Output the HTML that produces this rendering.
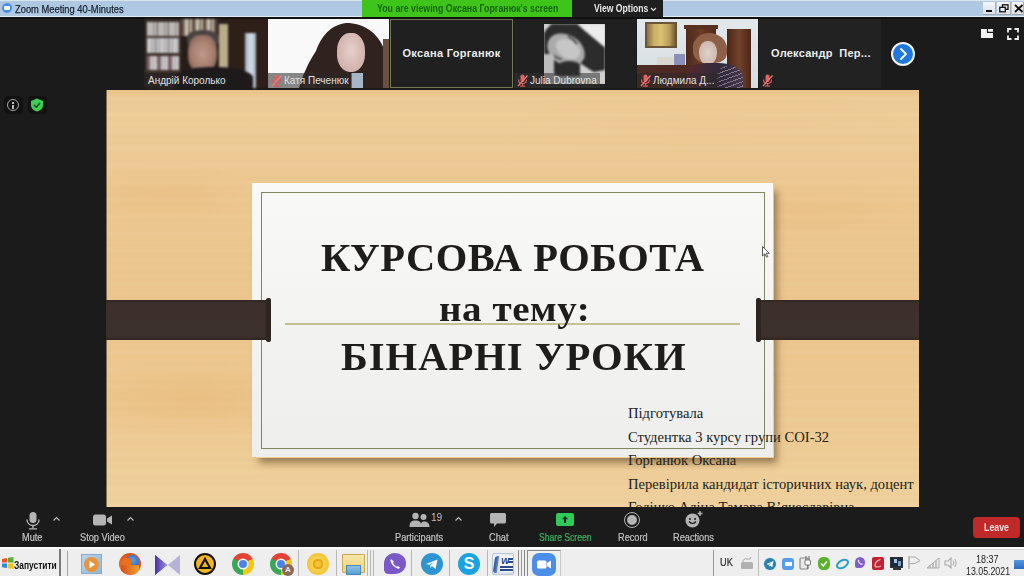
<!DOCTYPE html>
<html><head><meta charset="utf-8">
<style>
*{margin:0;padding:0;box-sizing:border-box}
html,body{width:1024px;height:576px;overflow:hidden;background:#1b1b1b;font-family:"Liberation Sans",sans-serif}
.a{position:absolute}
#titlebar{left:0;top:0;width:1024px;height:17px;background:linear-gradient(180deg,#b0c8e0,#aec8e4 50%,#b0cae2);border-top:1px solid #d6e6ec;border-bottom:1px solid #e2eaf2}
#ttext{left:15px;top:3px;font-size:11px;line-height:12px;color:#18222e;white-space:nowrap;transform:scaleX(0.85);transform-origin:0 0;-webkit-text-stroke:0.25px #18222e}
#green{left:362px;top:0;width:210px;height:17px;background:#3fc41a}
#gtext{left:377px;top:3px;font-size:10px;line-height:12px;color:#17650c;white-space:nowrap;font-weight:bold;transform:scaleX(0.88);transform-origin:0 0}
#vopt{left:572px;top:0;width:91px;height:17px;background:#1f1f1f}
#votext{left:594px;top:3px;font-size:10px;line-height:12px;color:#e8e8e8;font-weight:bold;white-space:nowrap;transform:scaleX(0.86);transform-origin:0 0}
.wbtn{top:2px;height:13px;background:linear-gradient(#f4f6f8,#dde2e6);border-bottom:1px solid #9aa3aa;border-right:1px solid #aab2b8}
#slide{left:106px;top:90px;width:813px;height:417px;overflow:hidden;background:#e9c692}
#toolbar{left:0;top:507px;width:1024px;height:39px;background:#1b1b1b}
#taskbar{left:0;top:547px;width:1024px;height:29px;background:#eeeeee;border-top:2px solid #fbfbfb}
.name{font-size:10px;color:#e0e0e0;white-space:nowrap;line-height:13px}
.tlbl{font-size:10px;line-height:12px;color:#c2c2c2;white-space:nowrap;transform:scaleX(0.92);transform-origin:0 0;-webkit-text-stroke:0.2px #c2c2c2}
.tsep{top:550px;width:1px;height:26px;background:#b8b8b8}
.chrome{width:22px;height:22px;border-radius:50%;background:conic-gradient(from -60deg,#e34234 0deg 120deg,#f5c518 120deg 240deg,#3aa757 240deg 360deg)}
.chrome::after{content:"";position:absolute;left:7px;top:7px;width:8px;height:8px;border-radius:50%;background:#4a86e8;box-shadow:0 0 0 1.5px #f4f4f4}
</style></head><body>
<!-- title bar -->
<div id="titlebar" class="a"></div>
<div class="a" style="left:2px;top:3px;width:10px;height:10px;border-radius:50%;background:#4a8ee8"></div>
<div class="a" style="left:4px;top:6px;width:6px;height:4px;background:#fff;border-radius:1px"></div>
<div id="ttext" class="a">Zoom Meeting 40-Minutes</div>
<div id="green" class="a"></div>
<div id="gtext" class="a">You are viewing Оксана Горганюк's screen</div>
<div id="vopt" class="a"></div>
<div id="votext" class="a">View Options</div><svg class="a" style="left:650px;top:7px" width="7" height="5"><path d="M1 1 L3.5 3.5 L6 1" stroke="#ddd" stroke-width="1.2" fill="none"/></svg>
<div class="a wbtn" style="left:983px;width:13px"></div>
<div class="a wbtn" style="left:997px;width:14px"></div>
<div class="a wbtn" style="left:1012px;width:12px"></div>
<div class="a" style="left:986px;top:10px;width:6px;height:2px;background:#111"></div>
<svg class="a" style="left:999px;top:4px" width="10" height="9"><rect x="3.5" y="0.8" width="5.5" height="4.5" fill="none" stroke="#111" stroke-width="1.3"/><rect x="0.8" y="3.3" width="5.5" height="4.5" fill="#eef0f2" stroke="#111" stroke-width="1.3"/></svg>
<svg class="a" style="left:1014px;top:4px" width="10" height="9"><path d="M1 1 L8.5 8 M8.5 1 L1 8" stroke="#111" stroke-width="1.8"/></svg>


<!-- participant strip -->
<div class="a" style="left:0;top:17px;width:1024px;height:2px;background:#111"></div>
<!-- tile1 Андрій -->
<div class="a" style="left:145px;top:19px;width:123px;height:69px;overflow:hidden;background:#2b201b;filter:blur(0.8px)">
  <div class="a" style="left:0;top:0;width:36px;height:69px;background:#3d2f2a"></div>
  <div class="a" style="left:2px;top:3px;width:32px;height:14px;opacity:0.8;background:repeating-linear-gradient(90deg,#e6e6e6 0 3px,#b9b4ad 3px 4px,#f2f2f2 4px 6px,#8a8078 6px 7px,#d8d8d8 7px 10px,#5a4a44 10px 11px)"></div>
  <div class="a" style="left:2px;top:19px;width:32px;height:15px;opacity:0.8;background:repeating-linear-gradient(90deg,#f0f0f0 0 4px,#c8ccd2 4px 6px,#eaeaea 6px 8px,#7c7672 8px 9px,#dfe4ea 9px 12px,#a9b4c0 12px 13px)"></div>
  <div class="a" style="left:2px;top:37px;width:32px;height:14px;opacity:0.8;background:repeating-linear-gradient(90deg,#8e6e80 0 3px,#e8e8e8 3px 6px,#c4c4c4 6px 7px,#f0f0f0 7px 10px,#6e6a66 10px 11px)"></div>
  <div class="a" style="left:36px;top:0;width:36px;height:17px;background:repeating-linear-gradient(90deg,#5a4a3e 0 3px,#a89e8e 3px 5px,#d8d2c4 5px 7px,#7a6e62 7px 9px,#c2b6a0 9px 11px)"></div>
  <div class="a" style="left:36px;top:17px;width:38px;height:52px;background:#261c18"></div>
  <div class="a" style="left:74px;top:5px;width:9px;height:56px;background:#b9ad8c"></div>
  <div class="a" style="left:83px;top:0;width:40px;height:69px;background:#2e1f19"></div>
  <div class="a" style="left:100px;top:14px;width:11px;height:55px;background:linear-gradient(90deg,#9eacba,#d8e0e8 50%,#a4b2c0)"></div>
  <div class="a" style="left:42px;top:11px;width:32px;height:14px;border-radius:50% 50% 10% 10%;background:#4a4240"></div>
  <div class="a" style="left:43px;top:16px;width:29px;height:38px;border-radius:40% 40% 45% 45%;background:radial-gradient(ellipse at 50% 50%,#c09a8a 0,#a88070 50%,#6e5248 100%)"></div>
  <div class="a" style="left:30px;top:48px;width:78px;height:24px;border-radius:45% 45% 0 0;background:#1e1a1c"></div>
</div>
<div class="a" style="left:145px;top:73px;width:83px;height:15px;background:rgba(28,28,28,0.5)"></div>
<div class="a name" style="left:148px;top:74px">Андрій Королько</div>

<!-- tile2 Катя -->
<div class="a" style="left:268px;top:19px;width:121px;height:69px;overflow:hidden;background:#f9f9f9;filter:blur(0.7px)">
  <svg class="a" style="left:0;top:0" width="121" height="69"><path d="M31 69 C34 58 40 44 48 32 C53 18 62 6 78 4 C96 4 110 14 116 30 C120 42 121 55 121 69 Z" fill="#30231f"/><path d="M44 50 C40 58 36 64 34 69 L48 69 Z" fill="#3a2a24"/></svg>
  <div class="a" style="left:69px;top:14px;width:28px;height:39px;border-radius:45%;background:radial-gradient(ellipse at 50% 45%,#e6d0cc 0,#d2b2ac 70%,#a8867e 100%)"></div>
  <div class="a" style="left:83px;top:54px;width:12px;height:15px;background:#a6b6c6"></div>
  <div class="a" style="left:115px;top:20px;width:6px;height:49px;background:#6a5040"></div>
</div>
<div class="a" style="left:268px;top:73px;width:84px;height:15px;background:rgba(40,40,40,0.55)"></div>
<svg class="a" style="left:271px;top:74px" width="11" height="13"><rect x="3.5" y="0.5" width="4" height="7.5" rx="2" fill="#dd6464"/><path d="M1.5 5.5 Q1.5 9.5 5.5 9.5 Q9.5 9.5 9.5 5.5" stroke="#d65a5a" stroke-width="1.2" fill="none"/><rect x="5" y="9.5" width="1.2" height="2.5" fill="#d65a5a"/><rect x="3" y="11.5" width="5" height="1.2" fill="#d65a5a"/><path d="M1 12 L10.5 1.5" stroke="#e87a7a" stroke-width="1.3"/></svg>
<div class="a name" style="left:284px;top:74px">Катя Печенюк</div>

<!-- tile3 Оксана -->
<div class="a" style="left:390px;top:19px;width:123px;height:69px;background:#202020;border:1px solid #717a55"></div>
<div class="a" style="left:390px;top:47px;width:123px;text-align:center;font-size:11px;line-height:13px;font-weight:bold;color:#ececec;white-space:nowrap;letter-spacing:0.3px">Оксана Горганюк</div>

<!-- tile4 Julia -->
<div class="a" style="left:514px;top:19px;width:122px;height:69px;background:#202020"></div>
<div class="a" style="left:544px;top:24px;width:61px;height:60px;overflow:hidden;background:#bdbdbd">
  <svg class="a" style="left:0;top:0;filter:blur(0.8px)" width="61" height="60">
    <rect x="0" y="0" width="12" height="9" fill="#d6d6d6"/>
    <path d="M29 -2 L63 -2 L63 26 C52 18 40 8 29 -2 Z" fill="#ececec"/>
    <path d="M10 -2 L31 -2 C42 8 54 18 63 25 L63 48 L50 50 C44 44 38 40 34 38 L26 50 L12 52 L0 30 L0 9 C3 4 6 1 10 -2 Z" fill="#2c2c2c"/>
    <ellipse cx="22" cy="26" rx="20" ry="15" transform="rotate(32 22 26)" fill="#ababab"/>
    <ellipse cx="24" cy="25" rx="13" ry="9" transform="rotate(32 24 25)" fill="#c6c6c6"/>
    <path d="M24 12 C28 14 31 17 33 20" stroke="#3a3a3a" stroke-width="1.6" fill="none"/>
    <path d="M9 30 C12 34 15 35 18 35" stroke="#3a3a3a" stroke-width="1.4" fill="none"/>
    <rect x="0" y="30" width="10" height="20" fill="#bcbcbc"/>
    <path d="M36 40 L50 48 L61 46 L61 60 L34 60 Z" fill="#cfcfcf"/>
    <path d="M14 40 C20 36 30 36 36 40 L36 52 L14 52 Z" fill="#2c2c2c"/>
  </svg>
</div>
<div class="a" style="left:514px;top:73px;width:86px;height:15px;background:rgba(50,50,50,0.55)"></div>
<svg class="a" style="left:517px;top:74px" width="11" height="13"><rect x="3.5" y="0.5" width="4" height="7.5" rx="2" fill="#dd6464"/><path d="M1.5 5.5 Q1.5 9.5 5.5 9.5 Q9.5 9.5 9.5 5.5" stroke="#d65a5a" stroke-width="1.2" fill="none"/><rect x="5" y="9.5" width="1.2" height="2.5" fill="#d65a5a"/><rect x="3" y="11.5" width="5" height="1.2" fill="#d65a5a"/><path d="M1 12 L10.5 1.5" stroke="#e87a7a" stroke-width="1.3"/></svg>
<div class="a name" style="left:530px;top:74px">Julia Dubrovna</div>

<!-- tile5 Людмила -->
<div class="a" style="left:637px;top:19px;width:121px;height:69px;overflow:hidden;background:linear-gradient(180deg,#e2e8ec,#d6dde0);filter:blur(0.7px)">
  <div class="a" style="left:8px;top:3px;width:32px;height:26px;background:linear-gradient(90deg,#8a7040,#c8ae68 25%,#dcc274 50%,#b89c58 80%,#7a6038);border:2px solid #6a5538"></div>
  <div class="a" style="left:49px;top:7px;width:30px;height:52px;background:linear-gradient(90deg,#4e2a1c,#6a3a26 50%,#4e2a1c)"></div>
  <div class="a" style="left:47px;top:6px;width:34px;height:4px;background:#5a3020"></div>
  <div class="a" style="left:90px;top:10px;width:24px;height:59px;background:linear-gradient(90deg,#4a2618,#74422a 50%,#4a2618)"></div>
  <div class="a" style="left:20px;top:38px;width:16px;height:8px;background:#d8d8d0"></div>
  <div class="a" style="left:37px;top:35px;width:11px;height:11px;background:#8a90b8"></div>
  <div class="a" style="left:0;top:46px;width:56px;height:23px;background:#4e2a24"></div>
  <div class="a" style="left:56px;top:14px;width:34px;height:30px;border-radius:50% 55% 35% 40%;background:#8e6048"></div>
  <div class="a" style="left:62px;top:22px;width:18px;height:24px;border-radius:45% 45% 50% 50%;background:radial-gradient(ellipse,#e0d2ca,#c6aea2)"></div>
  <div class="a" style="left:50px;top:44px;width:56px;height:28px;border-radius:35% 45% 0 0;background:linear-gradient(90deg,#5a2830,#3e2a36 35%,#2e2a3e 65%,#4a3a50)"></div>
  <div class="a" style="left:80px;top:47px;width:26px;height:24px;border-radius:40% 50% 0 0;background:repeating-linear-gradient(160deg,rgba(0,0,0,0) 0 3px,rgba(210,180,180,0.5) 3px 4px)"></div>
</div>
<div class="a" style="left:637px;top:73px;width:82px;height:15px;background:rgba(40,40,40,0.45)"></div>
<svg class="a" style="left:640px;top:74px" width="11" height="13"><rect x="3.5" y="0.5" width="4" height="7.5" rx="2" fill="#dd6464"/><path d="M1.5 5.5 Q1.5 9.5 5.5 9.5 Q9.5 9.5 9.5 5.5" stroke="#d65a5a" stroke-width="1.2" fill="none"/><rect x="5" y="9.5" width="1.2" height="2.5" fill="#d65a5a"/><rect x="3" y="11.5" width="5" height="1.2" fill="#d65a5a"/><path d="M1 12 L10.5 1.5" stroke="#e87a7a" stroke-width="1.3"/></svg>
<div class="a name" style="left:653px;top:74px">Людмила Д...</div>

<!-- tile6 Олександр -->
<div class="a" style="left:759px;top:19px;width:122px;height:69px;background:#222222"></div>
<div class="a" style="left:771px;top:47px;font-size:11px;line-height:13px;font-weight:bold;color:#ececec;white-space:nowrap;letter-spacing:0.25px">Олександр&nbsp; Пер...</div>
<svg class="a" style="left:762px;top:74px" width="11" height="13"><rect x="3.5" y="0.5" width="4" height="7.5" rx="2" fill="#dd6464"/><path d="M1.5 5.5 Q1.5 9.5 5.5 9.5 Q9.5 9.5 9.5 5.5" stroke="#d65a5a" stroke-width="1.2" fill="none"/><rect x="5" y="9.5" width="1.2" height="2.5" fill="#d65a5a"/><rect x="3" y="11.5" width="5" height="1.2" fill="#d65a5a"/><path d="M1 12 L10.5 1.5" stroke="#e87a7a" stroke-width="1.3"/></svg>

<!-- next arrow -->
<div class="a" style="left:891px;top:42px;width:24px;height:24px;border-radius:50%;background:#1f78e0;border:2px solid #f4f4f4"></div>
<svg class="a" style="left:891px;top:42px" width="24" height="24"><path d="M10 7 L15 12 L10 17" stroke="#fff" stroke-width="1.8" fill="none" stroke-linecap="round"/></svg>
<!-- top right icons -->
<div class="a" style="left:981px;top:29px;width:12px;height:9px;background:#f4f4f4"></div>
<svg class="a" style="left:981px;top:29px" width="12" height="9"><path d="M6.5 0 V3.3 H12" stroke="#1b1b1b" stroke-width="1.2" fill="none"/></svg>
<svg class="a" style="left:1007px;top:28px" width="12" height="12"><path d="M1 4.5 V1 H4.5 M7.5 1 H11 V4.5 M11 7.5 V11 H7.5 M4.5 11 H1 V7.5" stroke="#eee" stroke-width="1.8" fill="none"/></svg>
<!-- left icons -->
<div class="a" style="left:4px;top:96px;width:19px;height:18px;border-radius:4px;background:#121212"></div>
<div class="a" style="left:7px;top:99px;width:12px;height:12px;border-radius:50%;border:1.5px solid #a8a8a8"></div>
<div class="a" style="left:12px;top:102px;width:2px;height:2px;background:#bbb"></div>
<div class="a" style="left:12px;top:105px;width:2px;height:4px;background:#bbb"></div>
<div class="a" style="left:28px;top:96px;width:19px;height:18px;border-radius:4px;background:#121212"></div>
<svg class="a" style="left:30px;top:98px" width="14" height="14"><path d="M7 0.5 L13 3 V7 C13 10.5 10 12.8 7 13.5 C4 12.8 1 10.5 1 7 V3 Z" fill="#3ccf55"/><path d="M4 7 L6.3 9.2 L10 5" stroke="#124a1c" stroke-width="1.6" fill="none"/></svg>

<!-- slide -->
<div id="slide" class="a">
  <div class="a" style="left:0;top:0;width:813px;height:417px;background:
    radial-gradient(ellipse 120px 30px at 60px 105px, rgba(228,170,105,0.22), rgba(225,160,95,0) 100%),
    radial-gradient(ellipse 140px 40px at 90px 310px, rgba(228,168,100,0.30), rgba(225,160,95,0) 100%),
    radial-gradient(ellipse 160px 35px at 700px 120px, rgba(228,170,105,0.18), rgba(225,165,100,0) 100%),
    radial-gradient(ellipse 200px 40px at 600px 30px, rgba(228,175,115,0.10), rgba(225,170,110,0) 100%),
    repeating-linear-gradient(180deg, rgba(210,150,80,0) 0px, rgba(210,150,80,0.035) 2px, rgba(210,150,80,0) 5px, rgba(255,245,220,0.04) 8px, rgba(210,150,80,0) 9px, rgba(210,150,80,0.03) 13px, rgba(210,150,80,0) 17px),
    linear-gradient(180deg,#eac38a 0px,#edcb95 8px,#eecd98 30px,#edca94 70px,#ecc891 120px,#ebc68f 170px,#ebc68e 220px,#ecc890 280px,#edca93 330px,#eecd97 375px,#efd19e 417px)"></div>
</div>
<!-- card shadow -->
<div class="a" style="left:256px;top:186px;width:518px;height:272px;box-shadow:3px 5px 7px rgba(70,45,20,0.5)"></div>
<div class="a" style="left:252px;top:183px;width:521px;height:274px;background:linear-gradient(180deg,#f9f9f8,#f2f2f1 60%,#eeeeed)"></div>
<div class="a" style="left:261px;top:192px;width:504px;height:257px;border:1.5px solid #7f875f"></div>
<div class="a" style="left:106px;top:90px;width:1px;height:417px;background:rgba(60,50,40,0.6)"></div>
<!-- dark bars -->
<div class="a" style="left:106px;top:300px;width:165px;height:40px;background:linear-gradient(180deg,#2f241f 0,#3d302a 3px,#3d312b 36px,#2f241f 40px)"></div>
<div class="a" style="left:756px;top:300px;width:163px;height:40px;background:linear-gradient(180deg,#2f241f 0,#3d302a 3px,#3d312b 36px,#2f241f 40px)"></div>
<div class="a" style="left:266px;top:298px;width:5px;height:44px;background:#2e2520;border-radius:2px"></div>
<div class="a" style="left:756px;top:298px;width:5px;height:44px;background:#2e2520;border-radius:2px"></div>
<svg class="a" style="left:762px;top:246px" width="8" height="12"><path d="M0.5 0.5 L0.5 10 L2.8 7.8 L4.5 11.2 L5.8 10.6 L4.2 7.3 L7.3 7.3 Z" fill="#fff" stroke="#333" stroke-width="0.8"/></svg>
<!-- line -->
<div class="a" style="left:285px;top:323px;width:455px;height:2px;background:#c4c293"></div>
<div id="t1" class="a" style="left:321px;top:234.5px;font:bold 39.5px/normal 'Liberation Serif',serif;letter-spacing:0.5px;color:#1f1d1c;white-space:nowrap;transform:scaleX(1.025);transform-origin:0 0">КУРСОВА РОБОТА</div>
<div id="t2" class="a" style="left:439px;top:287.8px;font:bold 35.5px/normal 'Liberation Serif',serif;letter-spacing:0.5px;color:#1f1d1c;white-space:nowrap;transform:scaleX(1.1);transform-origin:0 0">на тему:</div>
<div id="t3" class="a" style="left:341px;top:333.5px;font:bold 39.5px/normal 'Liberation Serif',serif;letter-spacing:0.9px;color:#1f1d1c;white-space:nowrap;transform:scaleX(1.03);transform-origin:0 0">БІНАРНІ УРОКИ</div>
<div class="a" style="left:628px;top:402px;font:14.6px/23.5px 'Liberation Serif',serif;color:#221e19;white-space:nowrap">Підготувала<br>Студентка 3 курсу групи СОІ-32<br>Горганюк Оксана<br>Перевірила кандидат історичних наук, доцент<br>Голінко Аліна Тамара Вʼячеславівна</div>


<!-- toolbar -->
<div id="toolbar" class="a"></div>
<!-- mute -->
<svg class="a" style="left:24px;top:511px" width="18" height="19"><rect x="5.5" y="1" width="7" height="11" rx="3.5" fill="#b4b4b4"/><path d="M3 8.5 C3 12.5 6 14.5 9 14.5 C12 14.5 15 12.5 15 8.5" stroke="#b4b4b4" stroke-width="1.4" fill="none"/><rect x="8.3" y="14.5" width="1.4" height="3" fill="#b4b4b4"/><rect x="5" y="17.2" width="8" height="1.3" fill="#b4b4b4"/></svg>
<div class="a tlbl" style="left:22px;top:532px">Mute</div>
<svg class="a" style="left:52px;top:516px" width="9" height="6"><path d="M1.5 4.5 L4.5 1.5 L7.5 4.5" stroke="#bbb" stroke-width="1.2" fill="none"/></svg>
<!-- stop video -->
<svg class="a" style="left:92px;top:513px" width="22" height="14"><rect x="1" y="1.5" width="13" height="11" rx="2.5" fill="#b4b4b4"/><path d="M15 5.5 L20 2.5 V11.5 L15 8.5 Z" fill="#b4b4b4"/></svg>
<div class="a tlbl" style="left:80px;top:532px">Stop Video</div>
<svg class="a" style="left:126px;top:516px" width="9" height="6"><path d="M1.5 4.5 L4.5 1.5 L7.5 4.5" stroke="#bbb" stroke-width="1.2" fill="none"/></svg>
<!-- participants -->
<svg class="a" style="left:409px;top:512px" width="22" height="16"><circle cx="6.5" cy="4" r="3.2" fill="#b4b4b4"/><circle cx="14.5" cy="5" r="3" fill="#b4b4b4"/><path d="M0.5 15 C0.5 9.5 3 8.5 6.5 8.5 C10 8.5 12.5 9.5 12.5 15 Z" fill="#b4b4b4"/><path d="M11 15 C11.5 11 13 9.5 15 9.5 C18 9.5 20.5 11 20.5 15 Z" fill="#b4b4b4"/></svg>
<div class="a" style="left:431px;top:512px;font-size:10px;color:#bdbdbd">19</div>
<svg class="a" style="left:454px;top:516px" width="9" height="6"><path d="M1.5 4.5 L4.5 1.5 L7.5 4.5" stroke="#bbb" stroke-width="1.2" fill="none"/></svg>
<div class="a tlbl" style="left:395px;top:532px">Participants</div>
<!-- chat -->
<svg class="a" style="left:489px;top:512px" width="18" height="16"><path d="M2.5 1 H15.5 Q17 1 17 2.5 V10 Q17 11.5 15.5 11.5 H8 L5 15 V11.5 H2.5 Q1 11.5 1 10 V2.5 Q1 1 2.5 1 Z" fill="#b4b4b4"/></svg>
<div class="a tlbl" style="left:489px;top:532px">Chat</div>
<!-- share screen -->
<div class="a" style="left:556px;top:513px;width:18px;height:13px;border-radius:2px;background:#2fcb5a"></div>
<svg class="a" style="left:556px;top:513px" width="18" height="13"><path d="M9 3 L12 6.3 H10 V10 H8 V6.3 H6 Z" fill="#0d2612"/></svg>
<div class="a tlbl" style="left:539px;top:532px;color:#3db35e;-webkit-text-stroke:0.2px #3db35e;transform:scaleX(0.86)">Share Screen</div>
<!-- record -->
<div class="a" style="left:624px;top:512px;width:16px;height:16px;border-radius:50%;border:1.5px solid #b4b4b4"></div>
<div class="a" style="left:627px;top:515px;width:10px;height:10px;border-radius:50%;background:#b4b4b4"></div>
<div class="a tlbl" style="left:618px;top:532px">Record</div>
<!-- reactions -->
<svg class="a" style="left:684px;top:510px" width="20" height="19"><circle cx="8.5" cy="10.5" r="7" fill="#b4b4b4"/><circle cx="6" cy="9" r="1" fill="#1b1b1b"/><circle cx="11" cy="9" r="1" fill="#1b1b1b"/><path d="M5 11.5 Q8.5 15.5 12 11.5" stroke="#1b1b1b" stroke-width="1.2" fill="none"/><path d="M16 1 V6 M13.5 3.5 H18.5" stroke="#b4b4b4" stroke-width="1.4"/></svg>
<div class="a tlbl" style="left:673px;top:532px">Reactions</div>
<!-- leave -->
<div class="a" style="left:973px;top:517px;width:47px;height:21px;border-radius:4px;background:#c0292a"></div>
<div class="a" style="left:984px;top:522px;font-size:10px;line-height:12px;font-weight:bold;color:#f5e0e0;white-space:nowrap;transform:scaleX(0.88);transform-origin:0 0">Leave</div>


<!-- taskbar -->
<div id="taskbar" class="a"></div>
<!-- start -->
<svg class="a" style="left:1px;top:556px" width="13" height="14"><path d="M1 3 L6 2 V6.5 H1 Z" fill="#e8542a"/><path d="M7 1.8 L12.5 1 V6.5 H7 Z" fill="#5cb030"/><path d="M1 7.5 H6 V12 L1 11.2 Z" fill="#2a8ae0"/><path d="M7 7.5 H12.5 V13 L7 12.2 Z" fill="#f6c21c"/></svg>
<div class="a" style="left:14px;top:559px;font-size:10.5px;line-height:12px;font-weight:bold;color:#111;white-space:nowrap;transform:scaleX(0.8);transform-origin:0 0">Запустити</div>
<div class="a" style="left:59px;top:549px;width:2px;height:27px;background:#7a7a7a"></div>
<div class="a" style="left:67px;top:551px;width:1px;height:25px;background:#a5a5a5"></div>
<!-- separators -->
<div class="a tsep" style="left:298px"></div>
<div class="a tsep" style="left:336px"></div>
<div class="a tsep" style="left:367px"></div>
<div class="a tsep" style="left:370px"></div>
<div class="a tsep" style="left:373px"></div>
<div class="a tsep" style="left:411px"></div>
<div class="a tsep" style="left:449px"></div>
<div class="a tsep" style="left:487px"></div>
<div class="a tsep" style="left:518px;background:#8a8a8a"></div>
<div class="a tsep" style="left:521px;background:#9a9a9a"></div>
<div class="a tsep" style="left:524px;background:#8a8a8a"></div>
<div class="a tsep" style="left:713px;background:#9a9a9a"></div>
<!-- media player -->
<div class="a" style="left:81px;top:554px;width:21px;height:20px;background:linear-gradient(135deg,#bcd4e8,#8fb8d8);border:1px solid #8aaacb"></div>
<div class="a" style="left:84px;top:557px;width:15px;height:15px;border-radius:50%;background:#e8943c"></div>
<svg class="a" style="left:84px;top:557px" width="15" height="15"><path d="M5.5 3.8 L11 7.5 L5.5 11.2 Z" fill="#fff"/></svg>
<!-- firefox -->
<div class="a" style="left:119px;top:553px;width:22px;height:22px;border-radius:50%;background:radial-gradient(circle at 35% 70%,#f08a28 0,#e2601e 45%,#c8401a 100%)"></div>
<div class="a" style="left:126px;top:555px;width:13px;height:13px;border-radius:50%;background:radial-gradient(circle at 50% 40%,#5aa0e8,#2a58b8)"></div>
<div class="a" style="left:121px;top:558px;width:10px;height:12px;border-radius:50% 20% 50% 50%;background:#e8701e"></div>
<div class="a" style="left:121px;top:565px;width:18px;height:9px;border-radius:0 0 50% 50%;background:linear-gradient(90deg,#d8501a,#f0a030)"></div>
<!-- kmplayer -->
<svg class="a" style="left:154px;top:554px" width="27" height="22"><path d="M1 1 L13 11 L1 21 Z" fill="#5e46b8"/><path d="M26 1 L14 11 L26 21 Z" fill="#b7b3d8"/><path d="M1 1 L13 11 L1 21 Z" fill="url(#km)"/><defs><linearGradient id="km" x1="0" x2="1"><stop offset="0" stop-color="#4a30a8"/><stop offset="1" stop-color="#9c8ee0"/></linearGradient></defs></svg>
<!-- aimp -->
<div class="a" style="left:194px;top:553px;width:22px;height:22px;border-radius:50%;background:#f2b51c;border:2.5px solid #111"></div>
<svg class="a" style="left:194px;top:553px" width="22" height="22"><path d="M11 6 L16 15 H6 Z" fill="none" stroke="#111" stroke-width="2.2"/></svg>
<!-- chrome -->
<div class="a chrome" style="left:232px;top:553px"></div>
<div class="a chrome" style="left:270px;top:553px"></div>
<div class="a" style="left:282px;top:564px;width:12px;height:12px;border-radius:50%;background:#8a6a58;color:#eee;font-size:8px;text-align:center;line-height:12px;font-weight:bold">A</div>
<!-- chrome canary yellow -->
<div class="a" style="left:307px;top:553px;width:22px;height:22px;border-radius:50%;background:radial-gradient(circle,#f4c430 0,#f4c430 3px,#e6a819 3.5px,#e6a819 5px,#f7d24a 5.5px,#f0b82a 100%)"></div>
<!-- folder -->
<div class="a" style="left:342px;top:554px;width:23px;height:19px;background:linear-gradient(180deg,#f6e6a8,#eed27a);border:1px solid #c8a850;border-radius:1px"></div>
<div class="a" style="left:346px;top:565px;width:15px;height:10px;background:linear-gradient(#8ec4e8,#5aa0d0);border:1px solid #4a88b8"></div>
<!-- viber -->
<div class="a" style="left:384px;top:553px;width:22px;height:21px;border-radius:50% 50% 50% 20%;background:#7b58c8"></div>
<svg class="a" style="left:384px;top:553px" width="22" height="22"><path d="M7 6 Q6 7 7 9.5 Q9.5 14 13.5 15.5 Q15 16 16 14.8 L14.3 13 L12.8 13.8 Q10.5 12.5 9 10 L9.8 8.5 Z" fill="#fff"/></svg>
<!-- telegram -->
<div class="a" style="left:421px;top:553px;width:22px;height:22px;border-radius:50%;background:#2f95d0"></div>
<svg class="a" style="left:421px;top:553px" width="22" height="22"><path d="M5 11 L16.5 6.5 L14.5 16 L11 13 L9.5 15 L9.3 12 L14 8.5 L8.3 11.8 Z" fill="#fff"/></svg>
<!-- skype -->
<div class="a" style="left:458px;top:553px;width:22px;height:22px;border-radius:50%;background:#1aa3e0"></div>
<div class="a" style="left:458px;top:554px;width:22px;text-align:center;font-size:16px;font-weight:bold;color:#fff;line-height:20px">S</div>
<!-- word -->
<div class="a" style="left:492px;top:553px;width:22px;height:22px;border-radius:2px;background:linear-gradient(135deg,#eef2f8,#d4dceb);border:1px solid #b8c4d8"></div>
<div class="a" style="left:494px;top:556px;width:4px;height:17px;background:linear-gradient(90deg,#2a4e96,#6a8ac8);border-radius:3px 0 0 3px;transform:skewX(-8deg)"></div>
<div class="a" style="left:500px;top:556px;width:13px;height:16px;background:#f8f8fa"></div>
<div class="a" style="left:501px;top:556px;font:bold italic 9px/10px 'Liberation Sans',sans-serif;color:#22447e">W</div>
<div class="a" style="left:508px;top:558px;width:5px;height:1.5px;background:#2a4a88"></div>
<div class="a" style="left:508px;top:561px;width:5px;height:1.5px;background:#2a4a88"></div>
<div class="a" style="left:500px;top:566px;width:13px;height:1.5px;background:#2a4a88"></div>
<div class="a" style="left:500px;top:569px;width:13px;height:1.5px;background:#2a4a88"></div>
<!-- zoom active -->
<div class="a" style="left:527px;top:550px;width:34px;height:26px;border:1px solid #8a8a8a;border-bottom:none;border-right-color:#c8c8c8;background:#f0f0f0"></div>
<div class="a" style="left:532px;top:553px;width:24px;height:23px;border-radius:7px;background:#4a8ee8"></div>
<svg class="a" style="left:532px;top:553px" width="24" height="23"><rect x="5" y="7.5" width="9.5" height="8" rx="1.5" fill="#fff"/><path d="M15 10 L19 7.5 V15.5 L15 13 Z" fill="#fff"/></svg>
<!-- tray -->
<div class="a" style="left:720px;top:557px;font-size:10px;line-height:12px;color:#2a2a2a;-webkit-text-stroke:0.2px #2a2a2a;transform:scaleX(0.92);transform-origin:0 0">UK</div>
<svg class="a" style="left:740px;top:557px" width="14" height="13"><path d="M3 5 Q3 1 7 2 Q11 3 11 0" stroke="#a8a8a8" fill="none" stroke-width="1"/><rect x="1" y="5" width="12" height="7" rx="1.5" fill="#b0b0b0"/></svg>
<div class="a" style="left:758px;top:549px;width:266px;height:27px;border-left:1px solid #bdbdbd;border-top:1px solid #d5d5d5;background:#efefef"></div>
<div class="a" style="left:764px;top:558px;width:12px;height:12px;border-radius:50%;background:#2a80a8;box-shadow:0 0 0 1px #cfeefa"></div><svg class="a" style="left:764px;top:558px" width="12" height="12"><path d="M2.5 6 L9.5 3 L8.3 9.3 L6 7.5 L5 8.8 L4.9 7 L8 4.5 L4.3 6.8 Z" fill="#fff"/></svg>
<div class="a" style="left:782px;top:558px;width:12px;height:12px;border-radius:3px;background:#5a9cec"></div><div class="a" style="left:785px;top:562px;width:5px;height:4px;background:#fff;border-radius:1px"></div><div class="a" style="left:790px;top:562px;width:2px;height:4px;background:#fff"></div>
<svg class="a" style="left:799px;top:555px" width="13" height="16"><rect x="1" y="3" width="8" height="11" rx="1" fill="#e8e8e8" stroke="#8a8a8a" stroke-width="1.2"/><path d="M7 1 V5 M10 1 V5" stroke="#777" stroke-width="1.2"/><rect x="6" y="5" width="5.5" height="5" rx="1" fill="#fafafa" stroke="#777" stroke-width="1"/><path d="M8.7 10 V14" stroke="#777" stroke-width="1.2"/></svg>
<div class="a" style="left:818px;top:557px;width:12px;height:13px;border-radius:40%;background:#58b22c"></div><svg class="a" style="left:818px;top:557px" width="12" height="13"><path d="M3 6.5 L5.3 8.8 L9 4.5" stroke="#fff" stroke-width="1.5" fill="none"/></svg>
<svg class="a" style="left:836px;top:558px" width="13" height="12"><ellipse cx="6.5" cy="6" rx="6" ry="3.5" transform="rotate(-30 6.5 6)" stroke="#2a9ec8" stroke-width="2" fill="none"/></svg>
<div class="a" style="left:855px;top:557px;width:10px;height:11px;border-radius:50% 50% 50% 20%;background:#8060c8"></div><svg class="a" style="left:855px;top:557px" width="10" height="11"><path d="M3 2.5 Q2.5 3.5 3.5 5.5 Q5 7.5 7 8 L7.8 7 L6.8 6.2 L6 6.7 Q4.8 6 4 4.6 L4.5 3.8 Z" fill="#fff"/></svg>
<div class="a" style="left:872px;top:557px;width:12px;height:13px;border-radius:2px;background:#c42030"></div><svg class="a" style="left:872px;top:557px" width="12" height="13"><path d="M8.5 2.5 Q3 4 3 9 Q5 11 9 9" stroke="#f4c8c8" stroke-width="1.2" fill="none"/></svg>
<div class="a" style="left:890px;top:557px;width:13px;height:11px;background:#1a2a40;border:1px solid #333"></div><div class="a" style="left:894px;top:559px;width:3px;height:4px;background:#aac4e0"></div><div class="a" style="left:898px;top:561px;width:3px;height:5px;background:#7aa0c8"></div><div class="a" style="left:893px;top:568px;width:8px;height:2px;background:#333"></div>
<svg class="a" style="left:907px;top:555px" width="15" height="15"><path d="M2 1 V14" stroke="#aaa" stroke-width="1.5"/><path d="M2.5 2 H8 L13 5.5 L8 8.5 H2.5" stroke="#aaa" stroke-width="1" fill="none"/></svg>
<svg class="a" style="left:926px;top:556px" width="14" height="13"><path d="M1 12 H13 V2 Z" fill="none" stroke="#aaa" stroke-width="1"/><path d="M4 12 V9 M7 12 V7 M10 12 V4.5" stroke="#aaa" stroke-width="1.3"/></svg>
<svg class="a" style="left:944px;top:556px" width="14" height="14"><path d="M1 5 H4 L7 2 V12 L4 9 H1 Z" fill="none" stroke="#aaa" stroke-width="1.1"/><path d="M9 4.5 Q10.5 7 9 9.5 M11 3 Q13.5 7 11 11" stroke="#aaa" stroke-width="1" fill="none"/></svg>
<div class="a" style="left:976px;top:553px;font-size:11px;line-height:12px;color:#1e1e1e;white-space:nowrap;transform:scaleX(0.82);transform-origin:0 0">18:37</div>
<div class="a" style="left:966px;top:565px;font-size:11px;line-height:12px;color:#1e1e1e;white-space:nowrap;transform:scaleX(0.8);transform-origin:0 0">13.05.2021</div>
<div class="a" style="left:1014px;top:560px;width:10px;height:9px;background:linear-gradient(#5a9ae0,#2a6ac0)"></div>

</body></html>
